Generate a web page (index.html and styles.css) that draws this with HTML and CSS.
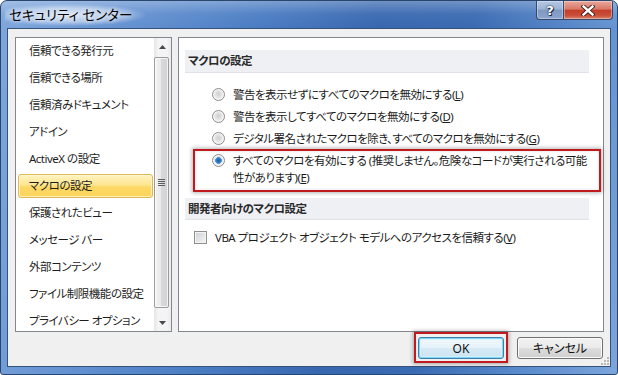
FILE: index.html
```html
<!DOCTYPE html>
<html lang="ja">
<head>
<meta charset="utf-8">
<title>セキュリティ センター</title>
<link rel="stylesheet" href="styles.css">
</head>
<body>
<div class="window">
  <div class="titlebar">
    <div class="title">セキュリティ センター</div>
    <div class="caption-buttons">
      <div class="cbtn help">?</div>
      <div class="cbtn close">
        <svg width="14" height="11" viewBox="0 0 14 11">
          <path d="M2.5 1.5 L11.5 9.5 M11.5 1.5 L2.5 9.5" stroke="#3a1812" stroke-width="4.2" stroke-linecap="square" fill="none"/>
          <path d="M2.5 1.5 L11.5 9.5 M11.5 1.5 L2.5 9.5" stroke="#ffffff" stroke-width="2.4" stroke-linecap="square" fill="none"/>
        </svg>
      </div>
    </div>
  </div>
  <div class="client">
    <div class="main">
      <div class="nav">
        <ul class="nav-list">
          <li>信頼できる発行元</li>
          <li>信頼できる場所</li>
          <li>信頼済みドキュメント</li>
          <li>アドイン</li>
          <li>ActiveX の設定</li>
          <li class="active">マクロの設定</li>
          <li>保護されたビュー</li>
          <li>メッセージ バー</li>
          <li>外部コンテンツ</li>
          <li>ファイル制限機能の設定</li>
          <li>プライバシー オプション</li>
        </ul>
        <div class="scrollbar">
          <div class="sb-arrow">
            <svg width="7" height="4" viewBox="0 0 7 4"><path d="M0 4 L3.5 0 L7 4 Z" fill="#4a4a4a"/></svg>
          </div>
          <div class="sb-track">
            <div class="sb-thumb"><span class="sb-grip"></span></div>
          </div>
          <div class="sb-arrow">
            <svg width="7" height="4" viewBox="0 0 7 4"><path d="M0 0 L7 0 L3.5 4 Z" fill="#4a4a4a"/></svg>
          </div>
        </div>
      </div>
      <div class="panel">
        <div class="section-head">マクロの設定</div>
        <div class="options">
          <div class="option"><span class="radio"></span><span class="label">警告を表示せずにすべてのマクロを無効にする(<u>L</u>)</span></div>
          <div class="option"><span class="radio"></span><span class="label">警告を表示してすべてのマクロを無効にする(<u>D</u>)</span></div>
          <div class="option"><span class="radio"></span><span class="label">デジタル署名されたマクロを除き、すべてのマクロを無効にする(<u>G</u>)</span></div>
          <div class="option flagged"><span class="radio checked"></span><span class="label">すべてのマクロを有効にする (推奨しません。危険なコードが実行される可能<br>性があります)(<u>E</u>)</span></div>
        </div>
        <div class="section-head second">開発者向けのマクロ設定</div>
        <div class="option check-row"><span class="checkbox"></span><span class="label">VBA プロジェクト オブジェクト モデルへのアクセスを信頼する(<u>V</u>)</span></div>
      </div>
    </div>
    <div class="footer">
      <div class="btn-focus"><div class="btn default">OK</div></div>
      <div class="btn">キャンセル</div>
    </div>
    <div class="size-grip">
      <svg width="9" height="9" viewBox="0 0 9 9">
        <g fill="#b9b9b9">
          <rect x="7" y="1" width="2" height="2"/>
          <rect x="4" y="4" width="2" height="2"/><rect x="7" y="4" width="2" height="2"/>
          <rect x="1" y="7" width="2" height="2"/><rect x="4" y="7" width="2" height="2"/><rect x="7" y="7" width="2" height="2"/>
        </g>
      </svg>
    </div>
  </div>
</div>
</body>
</html>
```

FILE: styles.css
```css
* { box-sizing: border-box; }
html, body { margin: 0; padding: 0; }
body {
  width: 618px;
  height: 375px;
  overflow: hidden;
  background: #ffffff;
  font-family: "Noto Sans", "Noto Sans CJK JP", sans-serif;
  font-size: 11.5px;
  letter-spacing: -0.5px;
  color: #1b1b1b;
  font-feature-settings: "palt";
}

.window {
  width: 618px;
  height: 375px;
  display: flex;
  flex-direction: column;
  border: 1px solid #2b466c;
  border-radius: 7px 7px 3px 3px;
  overflow: hidden;
  background:
    linear-gradient(180deg, rgba(255,255,255,0.28) 0, rgba(255,255,255,0.05) 13px, rgba(255,255,255,0) 27px),
    linear-gradient(100deg, #7fa7dc 0%, #6693d2 18%, #4b7dc3 38%, #3867b0 56%, #3a6ab2 70%, #5b8bcc 86%, #7ca5db 100%);
}

.titlebar {
  height: 27px;
  display: flex;
  align-items: flex-start;
  justify-content: space-between;
  padding-left: 4px;
}
.title {
  margin-top: 3px;
  padding: 2px 14px 2px 4px;
  font-size: 13.5px;
  letter-spacing: 0;
  line-height: 18px;
  color: #000000;
  white-space: nowrap;
  background: radial-gradient(ellipse at 45% 50%, rgba(255,255,255,0.75) 0%, rgba(255,255,255,0.45) 45%, rgba(255,255,255,0) 72%);
  text-shadow: 0 0 5px rgba(255,255,255,0.9);
}

.caption-buttons {
  display: flex;
  margin-right: 4px;
}
.cbtn {
  height: 19px;
  border: 1px solid #33496b;
  border-top: none;
  display: flex;
  align-items: center;
  justify-content: center;
  box-shadow: inset 0 0 0 1px rgba(255,255,255,0.35);
}
.help {
  width: 28px;
  border-radius: 0 0 0 4px;
  background: linear-gradient(180deg, #b4c8e3 0%, #9db4d6 45%, #8199c2 50%, #8ba5cf 100%);
  color: #ffffff;
  font-family: "DejaVu Sans", sans-serif;
  font-weight: bold;
  font-size: 13px;
  letter-spacing: 0;
  line-height: 1;
  text-shadow: 0 0 1px #1e2c44, 0 0 2px #1e2c44, 1px 1px 0 #1e2c44;
}
.close {
  width: 49px;
  border-left: none;
  border-radius: 0 0 4px 0;
  background: linear-gradient(180deg, #e8a89b 0%, #d87866 45%, #c43e2a 52%, #c9503a 80%, #d9826e 100%);
}

.client {
  flex: 1;
  margin: 0 6px 7px;
  border: 1px solid #34527a;
  background: #f0f0f0;
  padding: 8px 6px 0 7px;
  display: flex;
  flex-direction: column;
  position: relative;
}

.main {
  display: flex;
  gap: 6px;
  height: 295px;
}

.nav {
  flex: none;
  width: 157px;
  border: 1px solid #828790;
  background: #ffffff;
  display: flex;
}
.nav-list {
  flex: 1;
  min-width: 0;
  list-style: none;
  margin: 0;
  padding: 1px 1px 0 2px;
  overflow: hidden;
}
.nav-list li {
  height: 24px;
  line-height: 22px;
  padding-left: 10px;
  margin-bottom: 3px;
  border: 1px solid transparent;
  border-radius: 3px;
  white-space: nowrap;
  color: #1e1e1e;
}
.nav-list li.active {
  border-color: #e2b74f;
  background: linear-gradient(180deg, #fef3c2 0%, #fde690 45%, #fcd965 55%, #fbd45c 100%);
  box-shadow: inset 0 0 0 1px rgba(255,250,225,0.7);
}

.scrollbar {
  flex: none;
  width: 17px;
  display: flex;
  flex-direction: column;
  background: linear-gradient(90deg, #e6e6e6 0%, #f4f4f4 25%, #f4f4f4 75%, #ececec 100%);
}
.sb-arrow {
  height: 17px;
  display: flex;
  align-items: center;
  justify-content: center;
}
.sb-track {
  flex: 1;
  padding: 2px 2px 0 0;
}
.sb-thumb {
  height: 251px;
  border: 1px solid #9b9b9b;
  border-radius: 2px;
  background: linear-gradient(90deg, #f3f3f3 0%, #e9e9e9 45%, #d9d9d9 50%, #d2d2d2 100%);
  box-shadow: inset 0 0 0 1px rgba(255,255,255,0.7);
  display: flex;
  align-items: center;
  justify-content: center;
}
.sb-grip {
  width: 7px;
  height: 7px;
  background: repeating-linear-gradient(180deg, #5d5d5d 0 1px, transparent 1px 2px);
}

.panel {
  flex: 1;
  min-width: 0;
  border: 1px solid #828790;
  background: #ffffff;
  padding: 12px 14px 0 6px;
}
.section-head {
  height: 23px;
  line-height: 22px;
  padding-left: 3px;
  background: #eff0f4;
  border-bottom: 1px solid #dfe2e8;
  font-weight: bold;
  color: #2a2a2a;
}
.section-head.second {
  margin-top: 6px;
  height: 22px;
  line-height: 21px;
}

.options {
  margin: 11px 0 0 27px;
}
.option {
  display: flex;
  align-items: flex-start;
  gap: 8px;
  padding: 2px 0 3px;
  line-height: 17px;
  white-space: nowrap;
}
.option.flagged {
  margin: -1px -12px 0 -19px;
  padding: 1px 10px 4px 17px;
  border: 2px solid #c01a1e;
  box-shadow: 0 0 4px 1px rgba(0,0,0,0.3), inset 0 0 3px rgba(0,0,0,0.15);
}
.check-row {
  margin: 7px 0 0 9px;
}

.radio {
  flex: none;
  width: 13px;
  height: 13px;
  margin-top: 2px;
  border-radius: 50%;
  border: 1px solid #8d8d8d;
  background: radial-gradient(circle at 50% 45%, #cfcfcf 0, #dedede 2.5px, #ececec 4.5px, #fafafa 6px);
  box-shadow: inset 0 0 0 1px #f6f6f6;
}
.radio.checked {
  background:
    radial-gradient(circle at 50% 50%, #1c5fa8 0, #2a74c0 1.8px, #5aa4e6 3.4px, rgba(90,164,230,0) 3.6px),
    radial-gradient(circle at 50% 45%, #cfcfcf 0, #dedede 2.5px, #ececec 4.5px, #fafafa 6px);
}
.checkbox {
  flex: none;
  width: 13px;
  height: 13px;
  margin-top: 2px;
  border: 1px solid #8e8f8f;
  background: linear-gradient(135deg, #cdd0d5 0%, #e4e5e8 55%, #f6f6f6 100%);
  box-shadow: inset 0 0 0 1px #f4f4f4;
}
.label u { text-decoration: underline; }

.footer {
  display: flex;
  justify-content: flex-end;
  gap: 13px;
  margin-top: 5px;
  padding-right: 1px;
}
.btn {
  width: 86px;
  height: 22px;
  border: 1px solid #707070;
  border-radius: 3px;
  background: linear-gradient(180deg, #f2f2f2 0%, #ebebeb 48%, #dddddd 52%, #cfcfcf 100%);
  box-shadow: inset 0 0 0 1px #fbfbfb;
  display: flex;
  align-items: center;
  justify-content: center;
  color: #111111;
  font-size: 12px;
  letter-spacing: 0;
}
.btn.default {
  border-color: #3c7fb1;
  background: linear-gradient(180deg, #f1f8fc 0%, #e6f2f9 48%, #d6eaf5 52%, #cbe3f1 100%);
  box-shadow: inset 0 0 0 1px #7fd6f2, inset 0 0 0 2px rgba(214,240,250,0.8);
}
.btn-focus {
  margin: -5px -4px -4px;
  padding: 3px 2px 2px;
  border: 2px solid #c01a1e;
  box-shadow: 0 0 4px 1px rgba(0,0,0,0.3);
}

.size-grip {
  position: absolute;
  right: 1px;
  bottom: 1px;
  width: 9px;
  height: 9px;
  display: flex;
}
```
